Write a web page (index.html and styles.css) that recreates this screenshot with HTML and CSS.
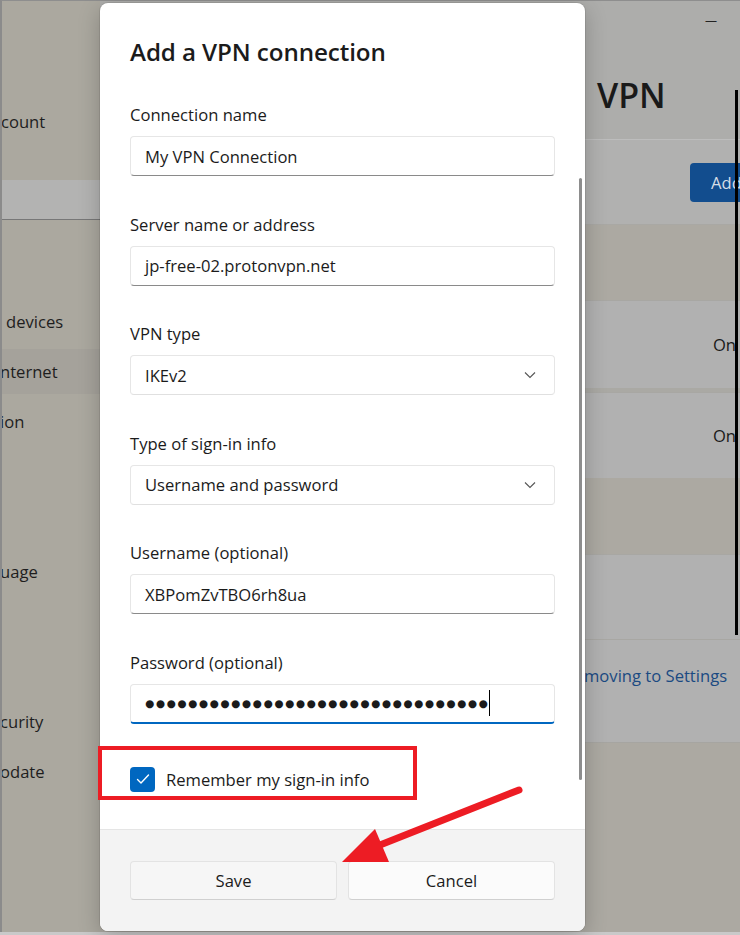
FILE: index.html
```html
<!DOCTYPE html>
<html lang="en">
<head>
<meta charset="utf-8">
<title>Add a VPN connection</title>
<link rel="stylesheet" href="styles.css">
</head>
<body>
<div class="window">
  <nav class="nav">
    <div class="nav-account">count</div>
    <div class="nav-search"></div>
    <ul class="nav-list">
      <li class="nav-item first">devices</li>
      <li class="nav-item is-selected">nternet</li>
      <li class="nav-item">ion</li>
      <li class="nav-item"></li>
      <li class="nav-item"></li>
      <li class="nav-item">uage</li>
      <li class="nav-item"></li>
      <li class="nav-item"></li>
      <li class="nav-item">curity</li>
      <li class="nav-item">odate</li>
    </ul>
  </nav>
  <main class="main">
    <div class="titlebar"><span class="minimize">—</span></div>
    <header class="page-head"><h2 class="page-title">VPN</h2></header>
    <section class="add-row"><button class="add-btn">Add</button></section>
    <div class="block warm h75"></div>
    <div class="row h88"><span class="state">On</span></div>
    <div class="gap4"></div>
    <div class="row h86"><span class="state">On</span></div>
    <div class="block warm h77"></div>
    <div class="row h85"></div>
    <div class="row h104 link-row"><span class="link">moving to Settings</span></div>
    <div class="block warm fill"></div>
  </main>
  <div class="edge-bar"></div>
</div>

<div class="dialog">
  <div class="dialog-body">
    <h1 class="dialog-title">Add a VPN connection</h1>

    <div class="field first">
      <label class="field-label">Connection name</label>
      <div class="input">My VPN Connection</div>
    </div>
    <div class="field">
      <label class="field-label">Server name or address</label>
      <div class="input">jp-free-02.protonvpn.net</div>
    </div>
    <div class="field">
      <label class="field-label">VPN type</label>
      <div class="input select">IKEv2
        <svg class="chev" width="12" height="8" viewBox="0 0 12 8"><polyline points="1,1.5 6,6.5 11,1.5" fill="none" stroke="#555" stroke-width="1.1"/></svg>
      </div>
    </div>
    <div class="field">
      <label class="field-label">Type of sign-in info</label>
      <div class="input select">Username and password
        <svg class="chev" width="12" height="8" viewBox="0 0 12 8"><polyline points="1,1.5 6,6.5 11,1.5" fill="none" stroke="#555" stroke-width="1.1"/></svg>
      </div>
    </div>
    <div class="field">
      <label class="field-label">Username (optional)</label>
      <div class="input">XBPomZvTBO6rh8ua</div>
    </div>
    <div class="field">
      <label class="field-label">Password (optional)</label>
      <div class="input focused"><span class="dots">●●●●●●●●●●●●●●●●●●●●●●●●●●●●●●●●</span><span class="caret"></span></div>
    </div>

    <div class="check-row">
      <span class="checkbox">
        <svg width="14" height="12" viewBox="0 0 14 12"><polyline points="1.5,6.5 5,10 12.5,2" fill="none" stroke="#fff" stroke-width="1.4" stroke-linecap="round" stroke-linejoin="round"/></svg>
      </span>
      <span class="check-label">Remember my sign-in info</span>
    </div>

    <div class="scrollbar"></div>
  </div>
  <div class="dialog-footer">
    <button class="btn">Save</button>
    <button class="btn">Cancel</button>
  </div>
</div>

<div class="highlight-box"></div>
<svg class="arrow" width="740" height="935" viewBox="0 0 740 935">
  <line x1="519" y1="790" x2="380" y2="845" stroke="#ed1c24" stroke-width="7" stroke-linecap="round"/>
  <polygon points="342,862 375,829 389,862" fill="#ed1c24"/>
</svg>
</body>
</html>
```

FILE: styles.css
```css
* { box-sizing: border-box; }
html, body { margin: 0; padding: 0; }
body {
  width: 740px;
  height: 935px;
  overflow: hidden;
  position: relative;
  font-family: "Open Sans", "Noto Sans", sans-serif;
  background: #c9c9c9;
  color: #1b1b1b;
}

/* ---------- background window (dimmed) ---------- */
.window {
  display: flex;
  width: 740px;
  height: 932px;
  border-top: 1px solid #8e8e8e;
  border-left: 2px solid #8b8b8b;
  background: #aba89f;
  overflow: hidden;
}
.nav {
  width: 98px;
  flex: none;
  display: flex;
  flex-direction: column;
  font-size: 16.6px;
  color: #1e1e1e;
}
.nav-account {
  margin-top: 110px;
  line-height: 22px;
  margin-left: -1px;
}
.nav-search {
  margin-top: 47px;
  height: 40px;
  background: #b3b3b2;
  border-bottom: 1px solid #777;
}
.nav-list {
  list-style: none;
  margin: 74px 0 0;
  padding: 0;
}
.nav-item {
  height: 45px;
  margin-top: 5px;
  display: flex;
  align-items: center;
  padding-left: 0;
  margin-left: -2px;
}
.nav-item.first { padding-left: 6px; }
.nav-item.is-selected { background: #a5a29b; }

.main {
  flex: 1;
  min-width: 0;
  overflow: hidden;
  display: flex;
  flex-direction: column;
  background: #adadab;
}
.titlebar {
  height: 40px;
  flex: none;
  display: flex;
  justify-content: flex-end;
  padding-right: 23px;
}
.minimize {
  font-size: 12px;
  line-height: 40px;
  color: #222;
}
.page-head {
  height: 99px;
  flex: none;
  border-bottom: 1px solid #bdbdbd;
  padding-left: 497px;
}
.page-title {
  margin: 0;
  padding-top: 34px;
  font-size: 34px;
  line-height: 40px;
  font-weight: 600;
  color: #1a1a1a;
}
.add-row {
  height: 85px;
  flex: none;
  background: #b1b1b0;
  border-bottom: 1px solid #a9a8a4;
  padding: 23px 0 0 590px;
  display: flex;
  align-items: flex-start;
}
.add-btn {
  flex: none;
  width: 70px;
  height: 39px;
  border: none;
  border-radius: 4px;
  background: #124d8e;
  color: #d6dde6;
  font-family: inherit;
  font-size: 16.6px;
  text-align: left;
  padding: 0 0 0 21px;
}
.block.warm { background: #aca9a2; flex: none; }
.h75 { height: 75px; }
.h77 { height: 76px; }
.block.fill { flex: 1; }
.row {
  flex: none;
  background: #b1b1b1;
  border-top: 1px solid #a8a7a3;
  display: flex;
  align-items: center;
  justify-content: flex-end;
  padding-right: 4px;
}
.h88 { height: 88px; }
.h86 { height: 86px; }
.h85 { height: 85px; }
.h104 { height: 104px; border-bottom: 1px solid #a6a5a1; }
.gap4 { height: 4px; flex: none; background: #aaa9a4; }
.state {
  font-size: 16.6px;
  color: #1a1a1a;
}
.link-row {
  align-items: flex-start;
  justify-content: flex-start;
  padding: 25px 0 0 484px;
}
.link {
  font-size: 16.6px;
  color: #1b4a82;
  line-height: 22px;
  white-space: nowrap;
}
.edge-bar {
  position: absolute;
  left: 735px;
  top: 90px;
  width: 3px;
  height: 545px;
  background: #000;
}

/* ---------- dialog ---------- */
.dialog {
  position: absolute;
  left: 100px;
  top: 3px;
  width: 485px;
  height: 928px;
  background: #fff;
  border-radius: 8px;
  overflow: hidden;
  display: flex;
  flex-direction: column;
  box-shadow: 0 6px 22px rgba(0,0,0,0.22), 0 0 0 1px rgba(0,0,0,0.08);
}
.dialog-body {
  position: relative;
  flex: 1;
  padding: 33px 30px 0;
}
.dialog-title {
  margin: 0;
  font-size: 24.2px;
  line-height: 32px;
  font-weight: 600;
  color: #1b1b1b;
  letter-spacing: -0.1px;
}
.field { margin-top: 38.6px; }
.field.first { margin-top: 37px; }
.field-label {
  display: block;
  font-size: 16.6px;
  line-height: 20px;
  margin-bottom: 11px;
  color: #1b1b1b;
}
.input {
  position: relative;
  height: 40px;
  width: 425px;
  border: 1px solid #e6e6e6;
  border-bottom-color: #8a8a8a;
  border-radius: 4px;
  background: #fff;
  padding: 0 14px;
  display: flex;
  align-items: center;
  font-size: 16.6px;
  color: #1b1b1b;
}
.input.select { border-bottom-color: #e0e0e0; }
.chev { position: absolute; right: 18px; top: 15px; }
.input.focused {
  border-bottom: 2px solid #0067c0;
}
.dots {
  font-family: "DejaVu Sans", sans-serif;
  font-size: 10.5px;
  letter-spacing: 1.6px;
  color: #1b1b1b;
}
.caret {
  width: 1px;
  height: 26px;
  background: #000;
  margin-left: 0;
}
.check-row {
  display: flex;
  align-items: center;
  margin-top: 43px;
  gap: 11px;
}
.checkbox {
  width: 25px;
  height: 25px;
  border-radius: 4px;
  background: #0067c0;
  display: flex;
  align-items: center;
  justify-content: center;
}
.check-label { font-size: 16.6px; color: #1b1b1b; }
.scrollbar {
  position: absolute;
  left: 479px;
  top: 175px;
  width: 3px;
  height: 602px;
  border-radius: 2px;
  background: #8d8d8d;
}
.dialog-footer {
  height: 102px;
  flex: none;
  background: #f3f3f3;
  border-top: 1px solid #e5e5e5;
  padding: 31px 30px 0;
  display: grid;
  grid-template-columns: 207px 207px;
  column-gap: 11px;
  align-content: start;
}
.btn {
  height: 39px;
  border: 1px solid #e3e3e3;
  border-bottom-color: #d0d0d0;
  border-radius: 4px;
  background: #f6f6f6;
  font-family: inherit;
  font-size: 16.6px;
  color: #1b1b1b;
}
.btn + .btn { background: #fbfbfb; }

/* ---------- annotations ---------- */
.highlight-box {
  position: absolute;
  left: 98px;
  top: 746px;
  width: 319px;
  height: 54px;
  border: 4px solid #ed1c24;
}
.arrow {
  position: absolute;
  left: 0;
  top: 0;
  pointer-events: none;
}
```
